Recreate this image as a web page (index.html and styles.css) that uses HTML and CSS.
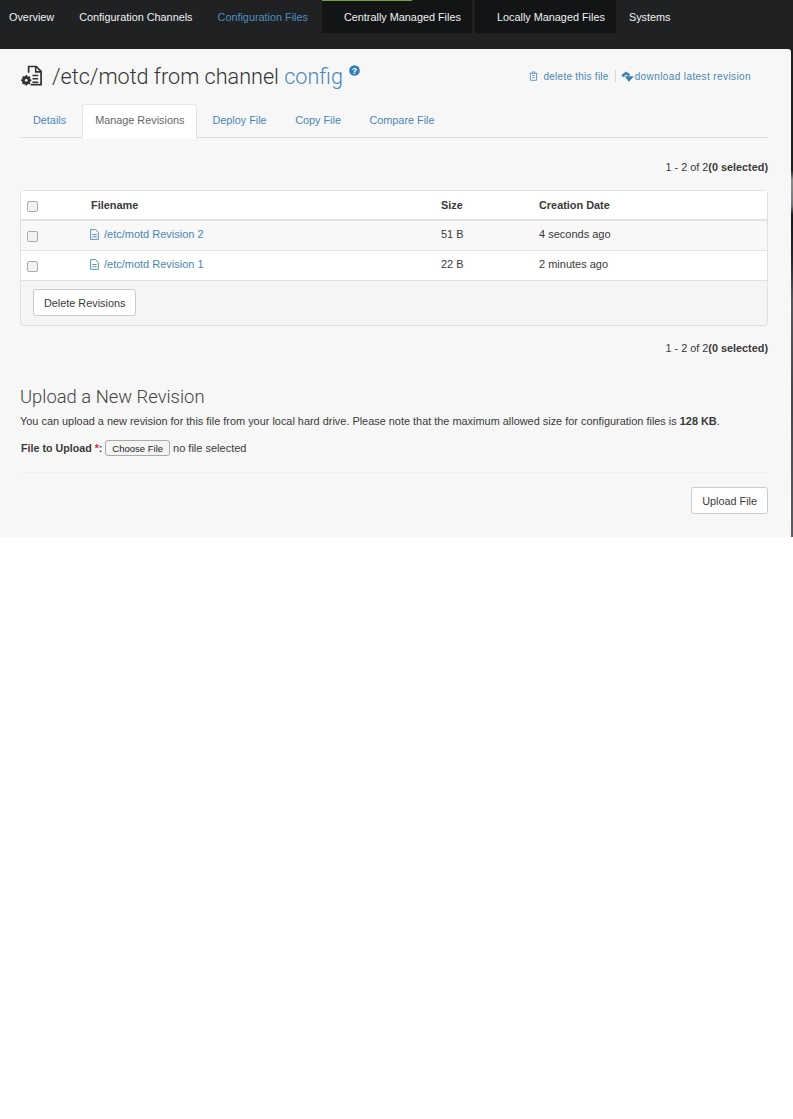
FILE: index.html
```html
<!DOCTYPE html>
<html lang="en">
<head>
<meta charset="utf-8">
<title>/etc/motd from channel config</title>
<link rel="stylesheet" href="styles.css">
</head>
<body>
<div class="shell">
  <nav class="topnav">
    <a class="nav-item">Overview</a>
    <a class="nav-item nav-channels">Configuration Channels</a>
    <a class="nav-item nav-current">Configuration Files</a>
    <a class="nav-item nav-dark nav-central">Centrally Managed Files</a>
    <a class="nav-item nav-dark nav-local">Locally Managed Files</a>
    <a class="nav-item nav-systems">Systems</a>
  </nav>
  <main class="panel">
    <header class="head">
      <svg class="head-icon" viewBox="0 0 24 24" width="23" height="23"><path d="M9 9V2.6h8l5 5v14H11" fill="none" stroke="#333" stroke-width="1.8"/><path d="M16.4 2.6v5.6H22" fill="none" stroke="#333" stroke-width="1.6"/><path d="M13 12h6M13 15.5h6M13 19h6" stroke="#333" stroke-width="1.6"/><circle cx="6.5" cy="17" r="3.4" fill="none" stroke="#333" stroke-width="2.4"/><path d="M6.5 11.6v10.8M1.1 17h10.8M2.7 13.2l7.6 7.6M10.3 13.2l-7.6 7.6" stroke="#333" stroke-width="1.6"/><circle cx="6.5" cy="17" r="1.4" fill="#f7f7f7"/></svg>
      <h1 class="title">/etc/motd from channel <a class="link">config</a></h1>
      <svg class="help" viewBox="0 0 12 12" width="11" height="11"><circle cx="6" cy="6" r="5.8" fill="#2f7fb5"/><text x="6" y="9.4" text-anchor="middle" class="help-q">?</text></svg>
      <div class="actions">
        <svg class="trash" viewBox="0 0 10 11" width="9" height="10"><path d="M.5 2.5h9M3.5 2.3V1h3v1.3M1.6 2.7v7.6h6.8V2.7M3.6 5h2.8M3.6 7.3h2.8" fill="none" stroke="#5b93bd" stroke-width="1"/></svg>
        <a class="link action-delete">delete this file</a>
        <span class="sep"></span>
        <svg class="dl" viewBox="0 0 14 11" width="14" height="11"><path d="M.3 4.2 5 .4l4.3 3.2-1.8 1.8L5 3.5 2.4 6.3z" fill="#3f7eab"/><path d="M3.6 5.2h9.2L8 10.8z" fill="#3f7eab"/></svg>
        <a class="link">download latest revision</a>
      </div>
    </header>
    <ul class="tabs">
      <li class="tab"><a class="link">Details</a></li>
      <li class="tab tab-active">Manage Revisions</li>
      <li class="tab"><a class="link">Deploy File</a></li>
      <li class="tab"><a class="link">Copy File</a></li>
      <li class="tab"><a class="link">Compare File</a></li>
    </ul>
    <p class="pager pager-top">1 - 2 of 2<b>(0 selected)</b></p>
    <section class="card">
      <div class="row row-head">
        <span class="cell-check"><span class="check"></span></span>
        <span class="cell-name">Filename</span>
        <span class="cell-size">Size</span>
        <span class="cell-date">Creation Date</span>
      </div>
      <div class="row row-body row-odd">
        <span class="cell-check"><span class="check"></span></span>
        <span class="cell-name"><svg class="file" viewBox="0 0 9 11" width="9" height="11"><path d="M.6.6h5l2.8 2.8v7H.6zM2.3 5.5h4.4M2.3 7.8h4.4" fill="none" stroke="#5b93bd" stroke-width="1"/></svg><a class="link">/etc/motd Revision 2</a></span>
        <span class="cell-size">51 B</span>
        <span class="cell-date">4 seconds ago</span>
      </div>
      <div class="row row-body">
        <span class="cell-check"><span class="check"></span></span>
        <span class="cell-name"><svg class="file" viewBox="0 0 9 11" width="9" height="11"><path d="M.6.6h5l2.8 2.8v7H.6zM2.3 5.5h4.4M2.3 7.8h4.4" fill="none" stroke="#5b93bd" stroke-width="1"/></svg><a class="link">/etc/motd Revision 1</a></span>
        <span class="cell-size">22 B</span>
        <span class="cell-date">2 minutes ago</span>
      </div>
      <div class="card-foot"><button class="btn">Delete Revisions</button></div>
    </section>
    <p class="pager pager-bottom">1 - 2 of 2<b>(0 selected)</b></p>
    <h2 class="subtitle">Upload a New Revision</h2>
    <p class="note">You can upload a new revision for this file from your local hard drive. Please note that the maximum allowed size for configuration files is <b>128 KB</b>.</p>
    <div class="upload">
      <b class="upload-label">File to Upload <span class="req">*</span>:</b>
      <button class="choose">Choose File</button>
      <span class="nofile">no file selected</span>
    </div>
    <div class="submit"><button class="btn">Upload File</button></div>
  </main>
</div>
</body>
</html>
```
FILE: styles.css
```css
html, body { margin: 0; padding: 0; background: #fff; }
body { font-family: "Liberation Sans", Arial, sans-serif; font-size: 11px; color: #3a3a3a; }
.shell { width: 793px; height: 537px; overflow: hidden; background: linear-gradient(to bottom, #1c1e1f 0, #1c1e1f 170px, #8a8a8c 180px, #77767a 205px, #17161c 215px, #2a2430 260px, #5a5560 300px, #4a4450 400px, #5f5a66 537px); }
.topnav { display: flex; height: 49px; color: #f1f1f1; background: #1f2123; }
.nav-item { font-size: 10.85px; line-height: 35px; height: 33px; white-space: nowrap; }
.nav-item:first-child { margin-left: 9px; }
.nav-channels { margin-left: 25px; }
.nav-current { margin-left: 25px; color: #4f8fc0; }
.nav-dark { background: #131415; padding: 0 11px 0 22px; }
.nav-central { margin-left: 14px; width: 117px; position: relative; }
.nav-central::before { content: ""; position: absolute; left: 0; top: 0; width: 90px; height: 1px; background: #6fa32e; }
.nav-local { margin-left: 3px; width: 108px; }
.nav-systems { margin-left: 13px; }
.panel { width: 791px; height: 488px; box-sizing: border-box; background: #f7f7f7; padding: 0 23px 0 20px; border-top-right-radius: 3px; }
.head { display: flex; align-items: center; height: 55px; }
.head-icon { margin-right: 9px; margin-top: -3px; }
.title { margin: 0; font-family: Roboto, "Liberation Sans", sans-serif; font-weight: 300; font-size: 21.6px; color: #333; white-space: nowrap; }
.link { color: #4a87b5; }
.help { margin: -12px 0 0 6px; }
.help-q { font: bold 9.5px "Liberation Sans", sans-serif; fill: #fff; }
.actions { display: flex; align-items: center; margin-left: auto; margin-right: 17px; font-size: 10px; letter-spacing: .4px; margin-top: -1px; }
.action-delete { margin-left: 6px; letter-spacing: .25px; }
.sep { width: 1px; height: 12px; background: #d8d8d8; margin: 0 5px 0 6px; }
.trash, .dl { flex: none; }
.tabs { display: flex; list-style: none; margin: 0; padding: 0; height: 33px; border-bottom: 1px solid #ddd; }
.tab { padding: 0 13px; line-height: 33px; height: 33px; font-size: 10.85px; margin-right: 2.5px; }
.tab-active { background: #fff; color: #666; border: 1px solid #e5e5e5; border-bottom: 0; border-radius: 3px 3px 0 0; height: 34px; padding: 0 12px; margin: 0 2px 0 .5px; line-height: 30px; }
.pager { margin: 0; text-align: right; font-size: 10.85px; line-height: 14px; }
.pager-top { margin-top: 22px; }
.pager-bottom { margin-top: 15px; }
.card { margin-top: 16px; background: #f5f5f5; border: 1px solid #e0e0e0; border-radius: 4px; height: 136px; box-sizing: border-box; }
.row { display: flex; align-items: center; height: 30px; background: #fff; border-bottom: 1px solid #e3e3e3; box-sizing: border-box; }
.row-head { border-bottom-width: 2px; font-weight: bold; font-size: 10.9px; }
.row-body { padding-bottom: 3px; }
.row-odd { background: #f8f8f8; }
.cell-check { width: 70px; padding-left: 6px; box-sizing: border-box; }
.check { display: block; width: 9px; height: 9px; border: 1px solid #aaa; border-radius: 2px; background: #f2f2f2; margin-top: 3px; }
.row-body .check { margin-top: 4px; }
.cell-name { width: 350px; display: flex; align-items: center; }
.cell-size { width: 98px; }
.file { margin-right: 5px; margin-left: -1px; }
.card-foot { padding: 8px 12px; }
.btn { font: 10.85px "Liberation Sans", Arial, sans-serif; color: #3a3a3a; background: #fff; border: 1px solid #ccc; border-radius: 3px; height: 27px; padding: 0 10px; }
.subtitle { margin: 30px 0 0; font-family: Roboto, "Liberation Sans", sans-serif; font-weight: 300; font-size: 18.4px; line-height: 24px; color: #444; }
.note { margin: 5px 0 0; font-size: 10.92px; line-height: 14px; white-space: nowrap; }
.upload { display: flex; align-items: center; margin-top: 12px; padding: 0 0 16px 1px; border-bottom: 1px solid #f0f0f0; }
.upload-label { margin-right: 3px; font-size: 10.7px; }
.req { color: #c33; }
.choose { font: 9.5px "Liberation Sans", Arial, sans-serif; color: #222; background: #f4f4f4; border: 1px solid #aaa; border-radius: 3px; height: 16px; padding: 0 6px; margin-right: 3px; }
.nofile { font-size: 11px; }
.submit { display: flex; justify-content: flex-end; margin-top: 14px; }
```
